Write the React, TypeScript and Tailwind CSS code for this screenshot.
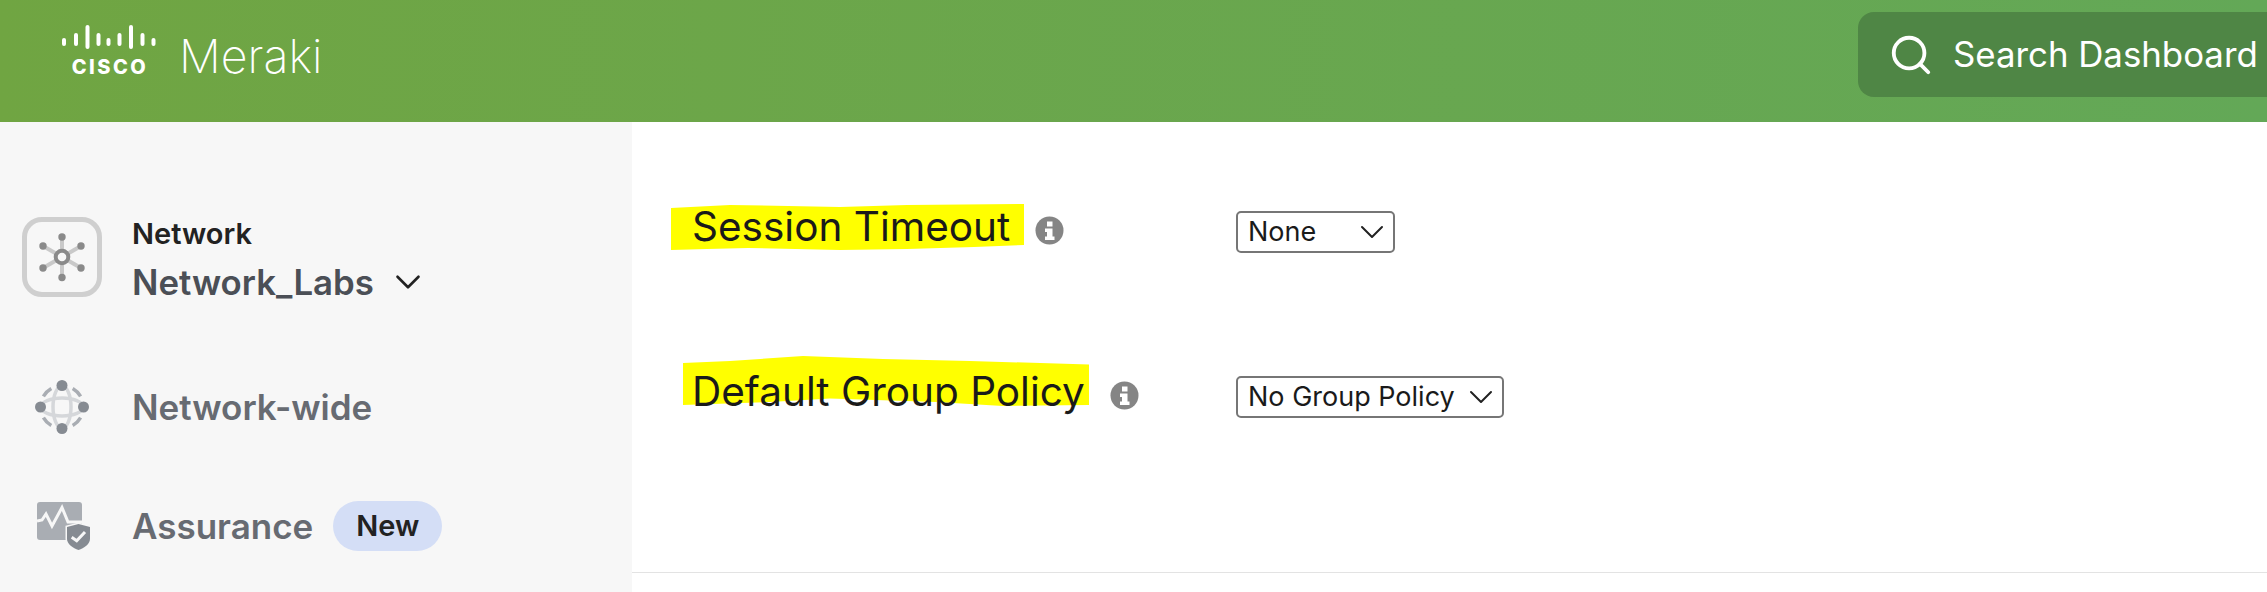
import { Search, ChevronDown } from 'lucide-react'

const inter = 'font-["Inter",sans-serif]'

function CiscoBars() {
  const bars = [
    { x: 0, y: 13, h: 8 },
    { x: 12, y: 8, h: 13 },
    { x: 23.5, y: 0, h: 24 },
    { x: 34.5, y: 8, h: 13 },
    { x: 44.5, y: 13, h: 8 },
    { x: 55.5, y: 8, h: 13 },
    { x: 67, y: 0, h: 24 },
    { x: 78.5, y: 8, h: 13 },
    { x: 89.5, y: 13, h: 8 },
  ]
  return (
    <svg width="94" height="25" viewBox="0 0 94 25" fill="white">
      {bars.map((b) => (
        <rect key={b.x} x={b.x} y={b.y} width="4" height={b.h} rx="2" />
      ))}
    </svg>
  )
}

function NetworkIcon() {
  const spokes = [
    [35, 10],
    [54, 19],
    [54, 41],
    [35, 50.5],
    [16, 41],
    [16, 19],
  ]
  return (
    <div className="w-[80px] h-[80px] mt-[1px] rounded-[20px] border-[5px] border-[#cfcfcf] flex items-center justify-center shrink-0">
      <svg width="70" height="60" viewBox="0 0 70 60">
        {spokes.map(([x, y]) => (
          <line key={`${x}-${y}`} x1="35" y1="30" x2={x} y2={y} stroke="#c9c9c9" strokeWidth="4" />
        ))}
        {spokes.map(([x, y]) => (
          <circle key={`${x}-${y}`} cx={x} cy={y} r="3.7" fill="#8a8a8a" />
        ))}
        <circle cx="35" cy="30" r="6.3" fill="#f7f7f7" stroke="#8a8a8a" strokeWidth="4" />
      </svg>
    </div>
  )
}

function GlobeIcon() {
  return (
    <svg width="54" height="54" viewBox="0 0 54 54" fill="none">
      <ellipse cx="27" cy="27" rx="9" ry="21" stroke="#d5d7da" strokeWidth="3.5" />
      <ellipse cx="27" cy="27" rx="21" ry="9" stroke="#d5d7da" strokeWidth="3.5" />
      <path d="M8.4 16.3 A21.5 21.5 0 0 1 16.3 8.4" stroke="#a9adb3" strokeWidth="3.5" />
      <path d="M37.7 8.4 A21.5 21.5 0 0 1 45.6 16.3" stroke="#a9adb3" strokeWidth="3.5" />
      <path d="M45.6 37.7 A21.5 21.5 0 0 1 37.7 45.6" stroke="#a9adb3" strokeWidth="3.5" />
      <path d="M16.3 45.6 A21.5 21.5 0 0 1 8.4 37.7" stroke="#a9adb3" strokeWidth="3.5" />
      <circle cx="27" cy="5.5" r="5.5" fill="#868b92" />
      <circle cx="27" cy="48.5" r="5.5" fill="#868b92" />
      <circle cx="5.5" cy="27" r="5.5" fill="#868b92" />
      <circle cx="48.5" cy="27" r="5.5" fill="#868b92" />
    </svg>
  )
}

function AssuranceIcon() {
  return (
    <svg width="54" height="48" viewBox="0 0 54 48" fill="none">
      <rect x="0" y="0" width="45" height="38" rx="3" fill="#a9adb3" />
      <path d="M0 19 L5 18 L9 12 L15 24 L25 5.5 L31 20 L45 20" stroke="#f7f7f7" strokeWidth="3" fill="none" />
      <path d="M30 25 L41.5 22 L53 25 V37 C53 42 47 46 41.5 48 C36 46 30 42 30 37 Z" fill="#868b92" stroke="#f7f7f7" strokeWidth="3" paintOrder="stroke" />
      <path d="M34.7 35.3 L39.7 38.7 L48 30" stroke="#f7f7f7" strokeWidth="3" fill="none" />
    </svg>
  )
}

function InfoIcon() {
  return (
    <svg width="29" height="29" viewBox="0 0 29 29" className="shrink-0">
      <circle cx="14.5" cy="14.5" r="14" fill="#858585" />
      <rect x="12" y="5.5" width="5.5" height="5" fill="white" />
      <path d="M10 12.5 H17.5 V20.5 H19.5 V24 H10 V20.5 H12 V16 H10 Z" fill="white" />
    </svg>
  )
}

// hand drawn marker highlight behind a label
function Marker({ width, height, points }: { width: number; height: number; points: string }) {
  return (
    <svg width={width} height={height} viewBox={`0 0 ${width} ${height}`} className="absolute top-0 left-0">
      <polygon points={points} fill="#ffff00" />
    </svg>
  )
}

function Select({ label, width, top }: { label: string; width: string; top: string }) {
  return (
    <div className={`${width} ${top} h-[42px] flex items-center pl-[10px] border-2 border-[#767676] rounded-[5px] bg-white text-[#1a1a1a] text-[27px]`}>
      <span className="mt-[1px]">{label}</span>
      <ChevronDown className="w-[40px] h-[40px] ml-auto mr-[1px] text-[#222]" strokeWidth={1.2} />
    </div>
  )
}

export default function App() {
  return (
    <div className={`${inter} w-[2267px] h-[592px] overflow-hidden flex flex-col bg-white`}>
      <header className="h-[122px] shrink-0 flex items-center bg-gradient-to-r from-[#70a542] to-[#63a857]">
        <div className="ml-[62px] flex flex-col items-center w-[94px] mt-[-20px]">
          <CiscoBars />
          <span className="text-white font-extrabold text-[20px] leading-[20px] mt-[7px] tracking-[2.5px] mr-[-2px]">CISCO</span>
        </div>
        <span className="ml-[23px] mt-[-10px] text-white text-[46.5px] font-extralight leading-none">Meraki</span>
        <div className="ml-auto w-[409px] h-[85px] mt-[-13px] rounded-l-[16px] bg-[#4f8645] flex items-center pl-[30px] text-white">
          <Search className="w-[46px] h-[46px]" strokeWidth={2} />
          <span className="ml-[19px] text-[34.8px] whitespace-nowrap">Search Dashboard</span>
        </div>
      </header>

      <div className="flex flex-1">
        <aside className="w-[632px] shrink-0 bg-[#f7f7f7] flex flex-col pl-[22px] pt-[94px]">
          <div className="flex items-start gap-[30px]">
            <NetworkIcon />
            <div className="flex flex-col">
              <span className="text-[29px] leading-[36px] font-semibold text-[#222]">Network</span>
              <div className="flex items-center mt-[8px]">
                <span className="text-[34.8px] leading-[44px] font-semibold text-[#4b4f56]">Network_Labs</span>
                <ChevronDown className="w-[42px] h-[42px] ml-[13px] text-[#222]" strokeWidth={1.5} />
              </div>
            </div>
          </div>
          <div className="flex items-center mt-[76px] ml-[13px] gap-[43px]">
            <GlobeIcon />
            <span className="text-[35px] leading-[44px] font-semibold text-[#676b72]">Network-wide</span>
          </div>
          <div className="flex items-center mt-[67px] ml-[15px]">
            <AssuranceIcon />
            <span className="ml-[41px] text-[35px] leading-[44px] font-semibold text-[#676b72]">Assurance</span>
            <span className="ml-[20px] h-[50px] w-[109px] rounded-full bg-[#d4def6] flex items-center justify-center text-[29px] font-semibold text-[#222]">New</span>
          </div>
        </aside>

        <main className="flex-1 flex flex-col">
          <div className="h-[451px] border-b border-[#e3e3e3] pl-[39px] pt-[82px]">
            <div className="flex items-start">
              <div className="relative h-[46px] w-[565px] flex items-center">
                <Marker
                  width={353}
                  height={46}
                  points="0,4 59,1 169,3 236,1 353,0 353,41 303,43 236,45 169,46 77,44 36,45 0,46"
                />
                <span className="relative ml-[21px] text-[40.5px] leading-none text-[#1a1a1a] whitespace-nowrap">Session Timeout</span>
                <span className="relative ml-[25px] mt-[6px]"><InfoIcon /></span>
              </div>
              <Select label="None" width="w-[159px]" top="mt-[7px]" />
            </div>
            <div className="flex items-start mt-[103px]">
              <div className="relative h-[50px] w-[565px] flex items-center">
                <Marker
                  width={419}
                  height={50}
                  points="12,7 59,5 132,0 212,3 299,5 418,8.5 418,49 332,50 265,46 159,42.5 99,46 12,49"
                />
                <span className="relative ml-[21px] mt-[22px] text-[40.5px] leading-none text-[#1a1a1a] whitespace-nowrap">Default Group Policy</span>
                <span className="relative ml-[25px] mt-[29px]"><InfoIcon /></span>
              </div>
              <Select label="No Group Policy" width="w-[268px]" top="mt-[20px]" />
            </div>
          </div>
        </main>
      </div>
    </div>
  )
}
